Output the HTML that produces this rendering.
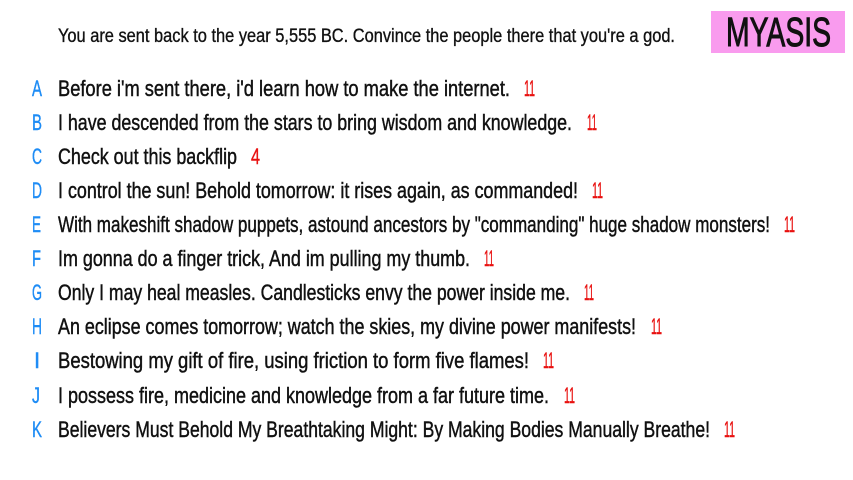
<!DOCTYPE html>
<html><head><meta charset="utf-8"><style>
html,body{margin:0;padding:0;background:#fff;width:853px;height:480px;overflow:hidden}
svg{display:block}
text{font-family:"Liberation Sans Narrow","Liberation Sans",sans-serif}
.t{fill:#111;stroke:#111;stroke-width:0.45;font-size:22px}
.l{fill:#1e8cf5;stroke:#1e8cf5;stroke-width:0.4;font-size:22px}
.n{fill:#e8100f;stroke:#e8100f;stroke-width:0.4;font-size:22px}
</style></head><body>
<svg width="853" height="480" viewBox="0 0 853 480">
<text class="t" x="58" y="42" style="font-size:19px;stroke-width:0.35" textLength="617" lengthAdjust="spacingAndGlyphs">You are sent back to the year 5,555 BC. Convince the people there that you're a god.</text>
<rect x="711" y="11" width="134" height="42" fill="#f99bee"/>
<text x="726" y="46" style="font-size:41px;fill:#111;stroke:#111;stroke-width:1" textLength="105" lengthAdjust="spacingAndGlyphs">MYASIS</text>

<g>
<text class="l" x="32" y="96" textLength="10" lengthAdjust="spacingAndGlyphs">A</text><text class="t" x="58" y="96" textLength="452" lengthAdjust="spacingAndGlyphs">Before i'm sent there, i'd learn how to make the internet.</text><text class="n" x="524" y="96" textLength="11" lengthAdjust="spacingAndGlyphs">11</text>
<text class="l" x="32" y="130" textLength="10" lengthAdjust="spacingAndGlyphs">B</text><text class="t" x="58" y="130" textLength="514" lengthAdjust="spacingAndGlyphs">I have descended from the stars to bring wisdom and knowledge.</text><text class="n" x="587" y="130" textLength="10" lengthAdjust="spacingAndGlyphs">11</text>
<text class="l" x="32" y="164" textLength="10" lengthAdjust="spacingAndGlyphs">C</text><text class="t" x="58" y="164" textLength="179" lengthAdjust="spacingAndGlyphs">Check out this backflip</text><text class="n" x="251" y="164" textLength="9" lengthAdjust="spacingAndGlyphs">4</text>
<text class="l" x="32" y="198" textLength="10" lengthAdjust="spacingAndGlyphs">D</text><text class="t" x="58" y="198" textLength="520" lengthAdjust="spacingAndGlyphs">I control the sun! Behold tomorrow: it rises again, as commanded!</text><text class="n" x="592" y="198" textLength="11" lengthAdjust="spacingAndGlyphs">11</text>
<text class="l" x="32" y="232" textLength="9" lengthAdjust="spacingAndGlyphs">E</text><text class="t" x="58" y="232" textLength="712" lengthAdjust="spacingAndGlyphs">With makeshift shadow puppets, astound ancestors by "commanding" huge shadow monsters!</text><text class="n" x="784" y="232" textLength="11" lengthAdjust="spacingAndGlyphs">11</text>
<text class="l" x="32" y="266" textLength="9" lengthAdjust="spacingAndGlyphs">F</text><text class="t" x="58" y="266" textLength="412" lengthAdjust="spacingAndGlyphs">Im gonna do a finger trick, And im pulling my thumb.</text><text class="n" x="484" y="266" textLength="10" lengthAdjust="spacingAndGlyphs">11</text>
<text class="l" x="32" y="300" textLength="10" lengthAdjust="spacingAndGlyphs">G</text><text class="t" x="58" y="300" textLength="512" lengthAdjust="spacingAndGlyphs">Only I may heal measles. Candlesticks envy the power inside me.</text><text class="n" x="584" y="300" textLength="10" lengthAdjust="spacingAndGlyphs">11</text>
<text class="l" x="32" y="334" textLength="10" lengthAdjust="spacingAndGlyphs">H</text><text class="t" x="58" y="334" textLength="578" lengthAdjust="spacingAndGlyphs">An eclipse comes tomorrow; watch the skies, my divine power manifests!</text><text class="n" x="651" y="334" textLength="11" lengthAdjust="spacingAndGlyphs">11</text>
<text class="l" x="34" y="368">I</text><text class="t" x="58" y="368" textLength="471" lengthAdjust="spacingAndGlyphs">Bestowing my gift of fire, using friction to form five flames!</text><text class="n" x="543" y="368" textLength="11" lengthAdjust="spacingAndGlyphs">11</text>
<text class="l" x="32" y="403" textLength="8" lengthAdjust="spacingAndGlyphs">J</text><text class="t" x="58" y="403" textLength="491" lengthAdjust="spacingAndGlyphs">I possess fire, medicine and knowledge from a far future time.</text><text class="n" x="564" y="403" textLength="11" lengthAdjust="spacingAndGlyphs">11</text>
<text class="l" x="32" y="437" textLength="10" lengthAdjust="spacingAndGlyphs">K</text><text class="t" x="58" y="437" textLength="652" lengthAdjust="spacingAndGlyphs">Believers Must Behold My Breathtaking Might: By Making Bodies Manually Breathe!</text><text class="n" x="724" y="437" textLength="11" lengthAdjust="spacingAndGlyphs">11</text>
</g>
</svg>
</body></html>
